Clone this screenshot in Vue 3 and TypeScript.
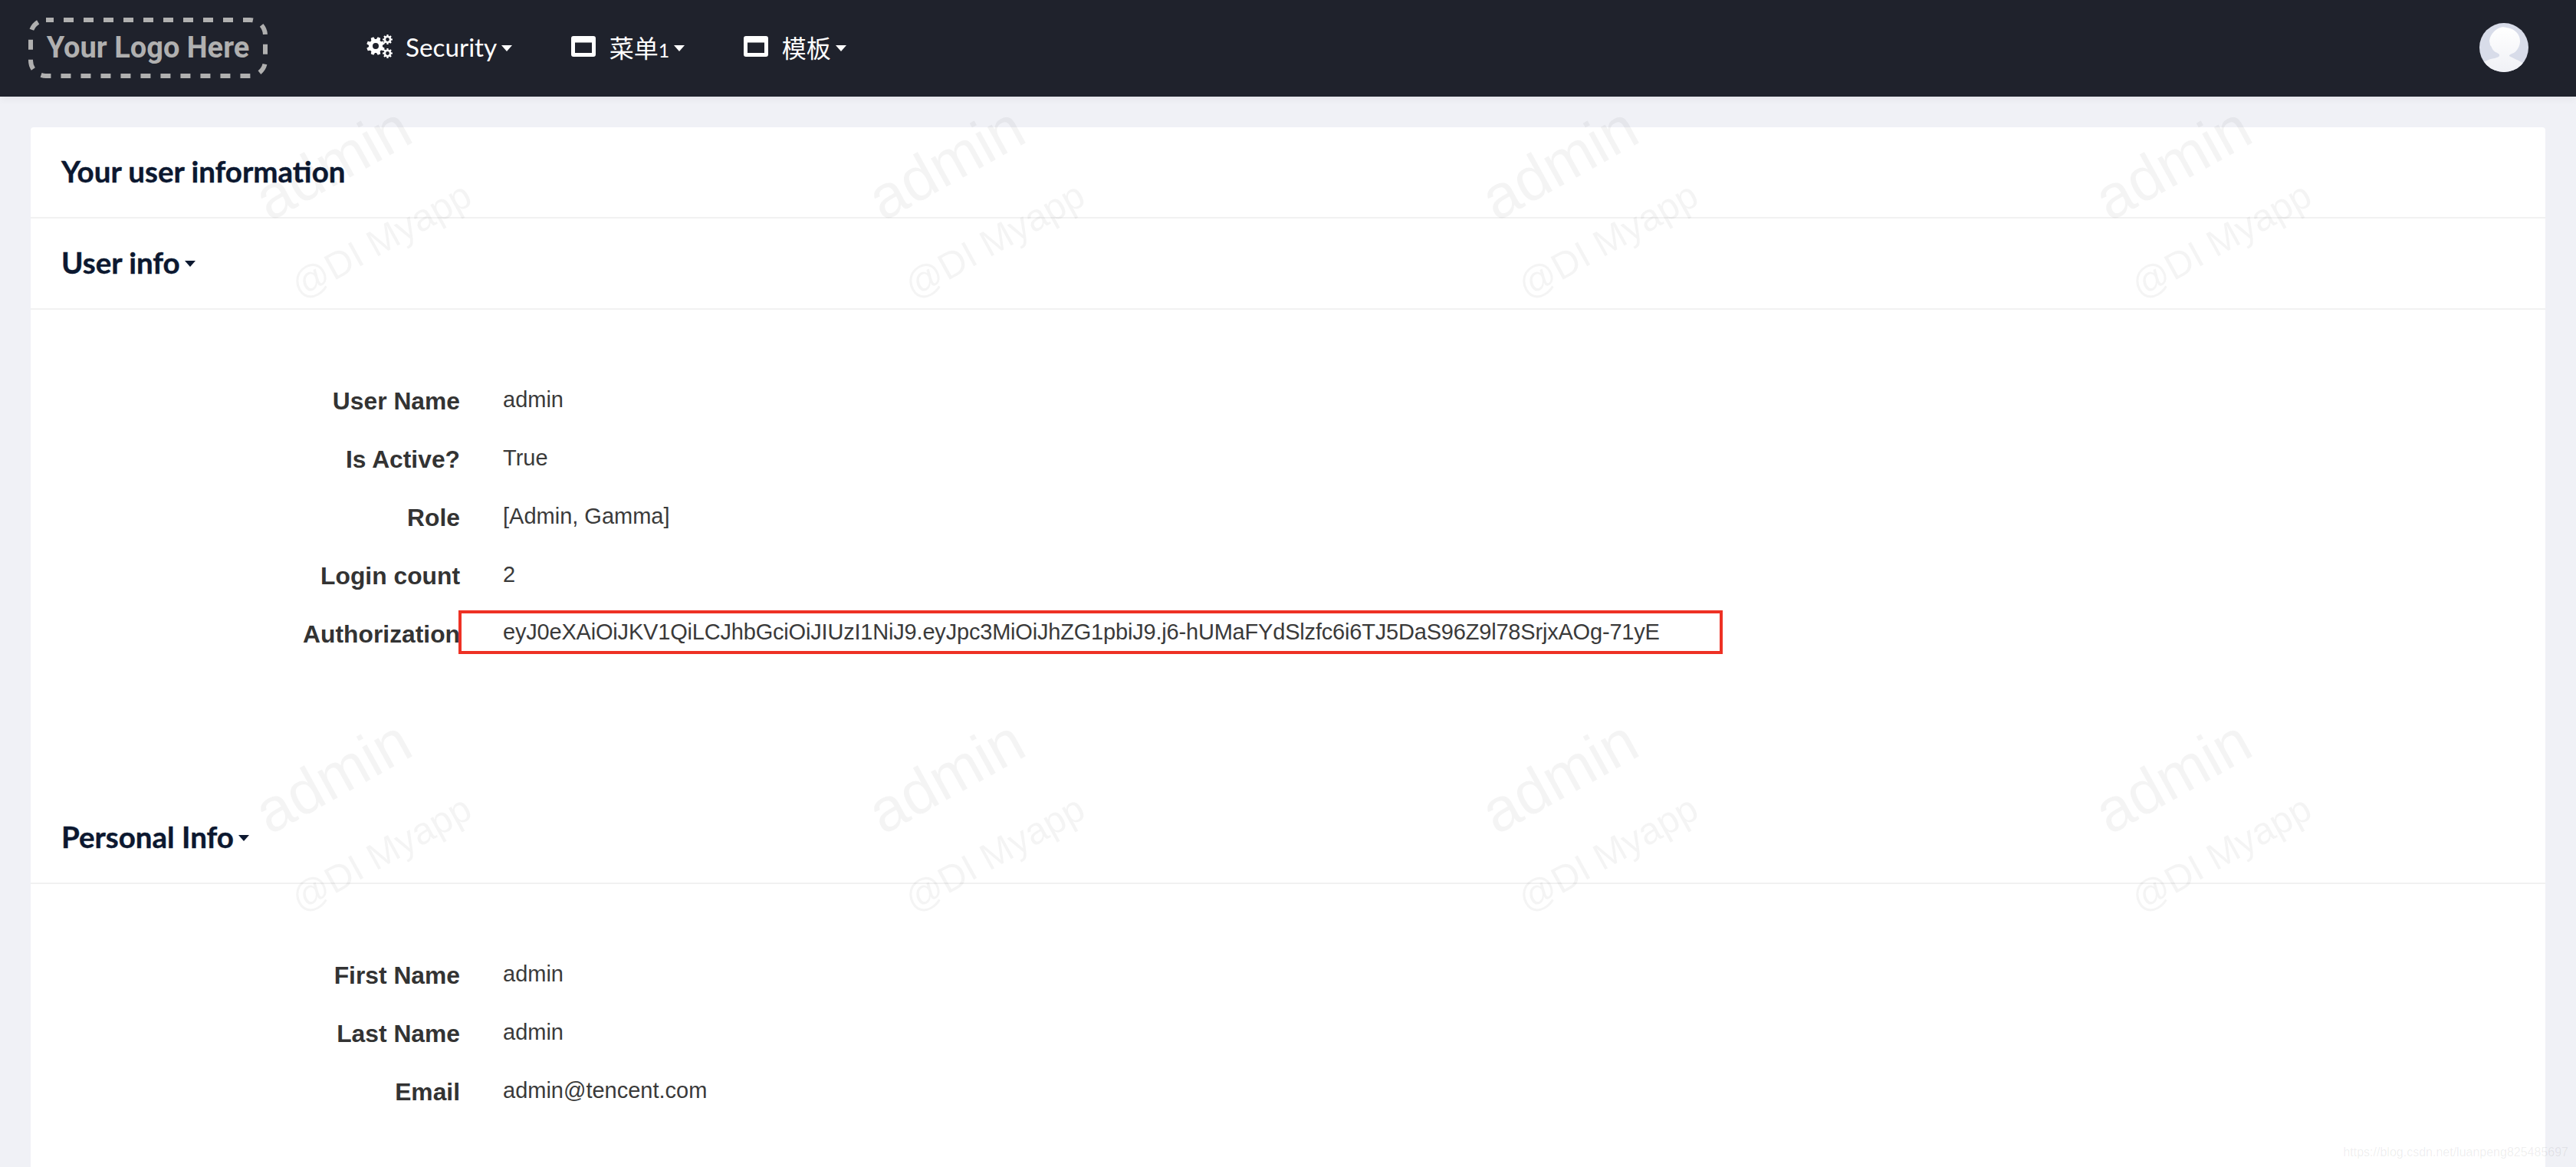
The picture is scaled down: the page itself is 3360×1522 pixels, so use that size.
<script setup lang="ts">
interface Row { label: string; value: string; marked?: boolean }

const userRows: Row[] = [
  { label: 'User Name', value: 'admin' },
  { label: 'Is Active?', value: 'True' },
  { label: 'Role', value: '[Admin, Gamma]' },
  { label: 'Login count', value: '2' },
  {
    label: 'Authorization',
    value: 'eyJ0eXAiOiJKV1QiLCJhbGciOiJIUzI1NiJ9.eyJpc3MiOiJhZG1pbiJ9.j6-hUMaFYdSlzfc6i6TJ5DaS96Z9l78SrjxAOg-71yE',
    marked: true,
  },
]
const personalRows: Row[] = [
  { label: 'First Name', value: 'admin' },
  { label: 'Last Name', value: 'admin' },
  { label: 'Email', value: 'admin@tencent.com' },
]
const marks: { x: number; y: number }[] = []
for (const y of [0, 800]) {
  for (const x of [0, 800, 1600, 2400]) marks.push({ x, y })
}

function gear(cx: number, cy: number, ro: number, ri: number, hole: number, teeth: number, phase = 0): string {
  const pts: string[] = []
  const step = (Math.PI * 2) / teeth
  for (let i = 0; i < teeth; i++) {
    const a = i * step + phase
    const seq: [number, number][] = [
      [ri, a - step * 0.36],
      [ro, a - step * 0.2],
      [ro, a + step * 0.2],
      [ri, a + step * 0.36],
    ]
    for (const [r, t] of seq) {
      pts.push(`${(cx + r * Math.cos(t)).toFixed(2)} ${(cy + r * Math.sin(t)).toFixed(2)}`)
    }
  }
  const ring = `M${cx - hole} ${cy}a${hole} ${hole} 0 1 0 ${hole * 2} 0a${hole} ${hole} 0 1 0 ${-hole * 2} 0z`
  return `M${pts.join('L')}z${ring}`
}
const cogs = [gear(12, 15, 12, 9, 4, 8, 0.39), gear(27.5, 6.5, 6.5, 4.8, 2.4, 8), gear(27.5, 24.5, 6.5, 4.8, 2.4, 8)].join('')
</script>

<template>
  <div class="page">
    <header class="nav">
      <div class="logo">
        <svg class="logo-frame" viewBox="0 0 312 79">
          <rect x="3" y="3" width="306" height="73" rx="20" fill="none" stroke="#b0b0b0" stroke-width="6" stroke-dasharray="13 13" stroke-dashoffset="3" />
        </svg>
        <span>Your Logo Here</span>
      </div>
      <nav class="menu">
        <a class="item">
          <svg class="gear" viewBox="0 0 34 31"><path fill="#fff" fill-rule="evenodd" :d="cogs" /></svg>
          <span>Security</span><i class="caret"></i>
        </a>
        <a class="item">
          <svg class="win" viewBox="0 0 32 27"><path fill="#fff" fill-rule="evenodd" d="M3 0h26a3 3 0 0 1 3 3v21a3 3 0 0 1-3 3H3a3 3 0 0 1-3-3V3a3 3 0 0 1 3-3zm2 8.500v13.500h22V8.500z" /></svg>
          <span class="cjk">菜单<span class="num">1</span></span><i class="caret"></i>
        </a>
        <a class="item">
          <svg class="win" viewBox="0 0 32 27"><path fill="#fff" fill-rule="evenodd" d="M3 0h26a3 3 0 0 1 3 3v21a3 3 0 0 1-3 3H3a3 3 0 0 1-3-3V3a3 3 0 0 1 3-3zm2 8.500v13.500h22V8.500z" /></svg>
          <span class="cjk">模板</span><i class="caret"></i>
        </a>
      </nav>
      <svg class="avatar" viewBox="0 0 64 64">
        <defs>
          <clipPath id="av"><circle cx="32" cy="32" r="32" /></clipPath>
          <linearGradient id="fig" x1="0" y1="0" x2="0" y2="1">
            <stop offset="0" stop-color="#ffffff" />
            <stop offset="1" stop-color="#f0f1f6" />
          </linearGradient>
        </defs>
        <g clip-path="url(#av)">
          <rect width="64" height="64" fill="#d8dce9" />
          <path fill="url(#fig)" d="M29 5.500c3-1 6 .5 9 1 8 1.500 15 8 15 17 0 6-3 11-6 14-2 2-6 2.500-8 4.500v1c5 3 13 6 19 10v11H2V53c2-2 6-3 10-5 5-2 12-2 14-5v-2c-3-3-7-3-9-7-1-2-1-3-3-5 0-2-1-4-1-6 1-9 9-16 16-17.500z" />
        </g>
      </svg>
    </header>

    <main class="content">
      <section class="card">
        <h2 class="head">Your user information</h2>
        <h2 class="head">User info<i class="caret dark"></i></h2>
        <div class="rows first">
          <div v-for="r in userRows" :key="r.label" class="row">
            <span class="label">{{ r.label }}</span>
            <span class="value" :class="{ marked: r.marked }">{{ r.value }}</span>
          </div>
        </div>
        <h2 class="head">Personal Info<i class="caret dark"></i></h2>
        <div class="rows">
          <div v-for="r in personalRows" :key="r.label" class="row">
            <span class="label">{{ r.label }}</span>
            <span class="value">{{ r.value }}</span>
          </div>
        </div>
      </section>
    </main>

    <div class="marks" aria-hidden="true">
      <template v-for="m in marks" :key="`${m.x}-${m.y}`">
        <span class="mark big" :style="{ left: m.x + 434 + 'px', top: m.y + 213 + 'px' }">admin</span>
        <span class="mark small" :style="{ left: m.x + 497 + 'px', top: m.y + 313 + 'px' }">@DI Myapp</span>
      </template>
    </div>
    <div class="credit">https://blog.csdn.net/luanpeng825485697</div>
  </div>
</template>

<style>
html, body { margin: 0; padding: 0; background: #f0f1f6; }
</style>

<style scoped>
.page {
  position: relative;
  width: 3360px;
  height: 1522px;
  overflow: hidden;
  background: #f0f1f6;
  font-family: "Liberation Sans", Arial, sans-serif;
}
.nav {
  height: 126px;
  box-sizing: border-box;
  background: #1f222c;
  display: flex;
  align-items: center;
  padding: 0 62px 2px 37px;
  box-shadow: 0 2px 10px rgba(0, 0, 0, .07);
  position: relative;
}
.logo {
  position: relative;
  width: 312px;
  height: 79px;
  display: flex;
  align-items: center;
  justify-content: center;
  color: #b0b0b0;
  font: 700 38px Roboto, sans-serif;
  white-space: nowrap;
}
.logo-frame { position: absolute; inset: 0; width: 100%; height: 100%; }
.menu {
  display: flex;
  align-items: center;
  margin-left: 129px;
  flex: 1;
  gap: 76.500px;
}
.item {
  display: flex;
  align-items: center;
  padding-bottom: 3px;
  color: #fff;
  font: 400 33.300px Lato, sans-serif;
}
.cjk { font-family: Lato, "Noto Sans CJK SC", sans-serif; font-size: 32px; }
.num { font-size: 25px; }
.gear { width: 34px; height: 31px; margin-right: 17px; }
.win { width: 32px; height: 27px; margin-right: 18px; }
.caret {
  display: inline-block;
  width: 0;
  height: 0;
  margin: 4px 0 0 6px;
  border-left: 7.500px solid transparent;
  border-right: 7.500px solid transparent;
  border-top: 8px solid currentColor;
}
.caret.dark { color: #0c1830; }
.avatar { width: 64px; height: 64px; }
.content { padding: 40px 40px 0; }
.card {
  background: #fff;
  border-radius: 4px;
  height: 1400px;
}
.head {
  margin: 0;
  height: 119px;
  box-sizing: border-box;
  padding: 0 40px 3px;
  display: flex;
  align-items: center;
  border-bottom: 2px solid #f1f1f1;
  color: #0c1830;
  font: 700 38.500px Lato, sans-serif;
  -webkit-text-stroke: .4px #0c1830;
}
.rows { padding-top: 81px; }
.rows.first { padding-bottom: 169px; }
.row {
  display: flex;
  align-items: center;
  height: 76px;
  color: #333;
}
.label {
  width: 560px;
  text-align: right;
  font-weight: 700;
  font-size: 31.800px;
  flex: none;
  color: #333;
}
.value {
  margin-left: 56px;
  font-size: 29px;
  margin-top: -4px;
  color: #3a3a3a;
  white-space: nowrap;
}
.value.marked {
  margin-left: -2px;
  margin-top: -5px;
  width: 1649px;
  height: 57px;
  box-sizing: border-box;
  border: 4px solid #ee3124;
  padding-left: 54px;
  line-height: 49px;
  letter-spacing: -.19px;
}
.marks { position: absolute; inset: 0; pointer-events: none; }
.mark {
  position: absolute;
  transform: translate(-50%, -50%) rotate(-29deg);
  color: rgba(0, 0, 0, .045);
  white-space: nowrap;
  font-family: "Liberation Sans", sans-serif;
}
.big { font-size: 80px; }
.small { font-size: 49px; }
.credit {
  position: absolute;
  right: 10px;
  bottom: 10px;
  font-size: 16px;
  color: rgba(0, 0, 0, .08);
}
</style>
